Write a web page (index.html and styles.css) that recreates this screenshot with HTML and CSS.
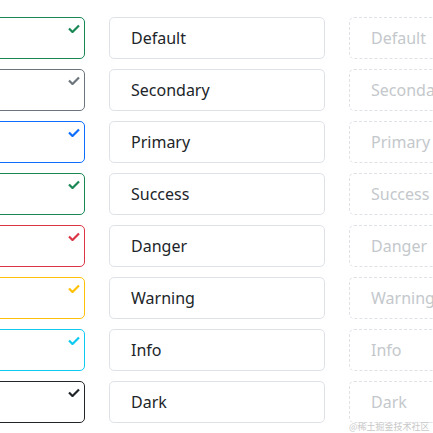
FILE: index.html
```html
<!DOCTYPE html>
<html>
<head>
<meta charset="utf-8">
<link rel="stylesheet" href="styles.css">
</head>
<body>
<div class="grid">
  <div class="card sel c-default"><svg class="check" viewBox="0 0 12 9"><polyline points="1,4.5 4.5,8 11,1.5"/></svg></div>
  <div class="card plain">Default</div>
  <div class="card dashed">Default</div>

  <div class="card sel c-secondary"><svg class="check" viewBox="0 0 12 9"><polyline points="1,4.5 4.5,8 11,1.5"/></svg></div>
  <div class="card plain">Secondary</div>
  <div class="card dashed">Secondary</div>

  <div class="card sel c-primary"><svg class="check" viewBox="0 0 12 9"><polyline points="1,4.5 4.5,8 11,1.5"/></svg></div>
  <div class="card plain">Primary</div>
  <div class="card dashed">Primary</div>

  <div class="card sel c-success"><svg class="check" viewBox="0 0 12 9"><polyline points="1,4.5 4.5,8 11,1.5"/></svg></div>
  <div class="card plain">Success</div>
  <div class="card dashed">Success</div>

  <div class="card sel c-danger"><svg class="check" viewBox="0 0 12 9"><polyline points="1,4.5 4.5,8 11,1.5"/></svg></div>
  <div class="card plain">Danger</div>
  <div class="card dashed">Danger</div>

  <div class="card sel c-warning"><svg class="check" viewBox="0 0 12 9"><polyline points="1,4.5 4.5,8 11,1.5"/></svg></div>
  <div class="card plain">Warning</div>
  <div class="card dashed">Warning</div>

  <div class="card sel c-info"><svg class="check" viewBox="0 0 12 9"><polyline points="1,4.5 4.5,8 11,1.5"/></svg></div>
  <div class="card plain">Info</div>
  <div class="card dashed">Info</div>

  <div class="card sel c-dark"><svg class="check" viewBox="0 0 12 9"><polyline points="1,4.5 4.5,8 11,1.5"/></svg></div>
  <div class="card plain">Dark</div>
  <div class="card dashed">Dark</div>
</div>
<div class="watermark">@稀土掘金技术社区</div>
</body>
</html>
```

FILE: styles.css
```css
html, body {
  margin: 0;
  padding: 0;
  background: #ffffff;
  overflow: hidden;
  width: 433px;
  height: 433px;
}
body {
  position: relative;
  font-family: "Noto Sans", "Open Sans", sans-serif;
}
.grid {
  display: grid;
  grid-template-columns: 216px 216px 216px;
  column-gap: 24px;
  row-gap: 10px;
  padding-top: 17px;
  margin-left: -131px;
}
.card {
  box-sizing: border-box;
  height: 42px;
  border-radius: 5px;
  padding-left: 21px;
  display: flex;
  align-items: center;
  font-size: 16px;
  position: relative;
  white-space: nowrap;
}
.plain {
  border: 1px solid #dee2e6;
  color: #212529;
}
.dashed {
  border: 1px dashed #dee2e6;
  color: #c4c8cc;
}
.sel {
  border: 1px solid currentColor;
}
.check {
  position: absolute;
  top: 6px;
  right: 4px;
  width: 12px;
  height: 9px;
  fill: none;
  stroke: currentColor;
  stroke-width: 2.2;
}
.c-default { color: #198754; }
.c-secondary { color: #6c757d; }
.c-primary { color: #0d6efd; }
.c-success { color: #198754; }
.c-danger { color: #dc3545; }
.c-warning { color: #ffc107; }
.c-info { color: #0dcaf0; }
.c-dark { color: #212529; }
.watermark {
  position: absolute;
  left: 349px;
  top: 421px;
  font-family: "Noto Sans CJK SC", sans-serif;
  font-size: 9px;
  line-height: 12px;
  color: #c8c8c8;
  white-space: nowrap;
}
```
